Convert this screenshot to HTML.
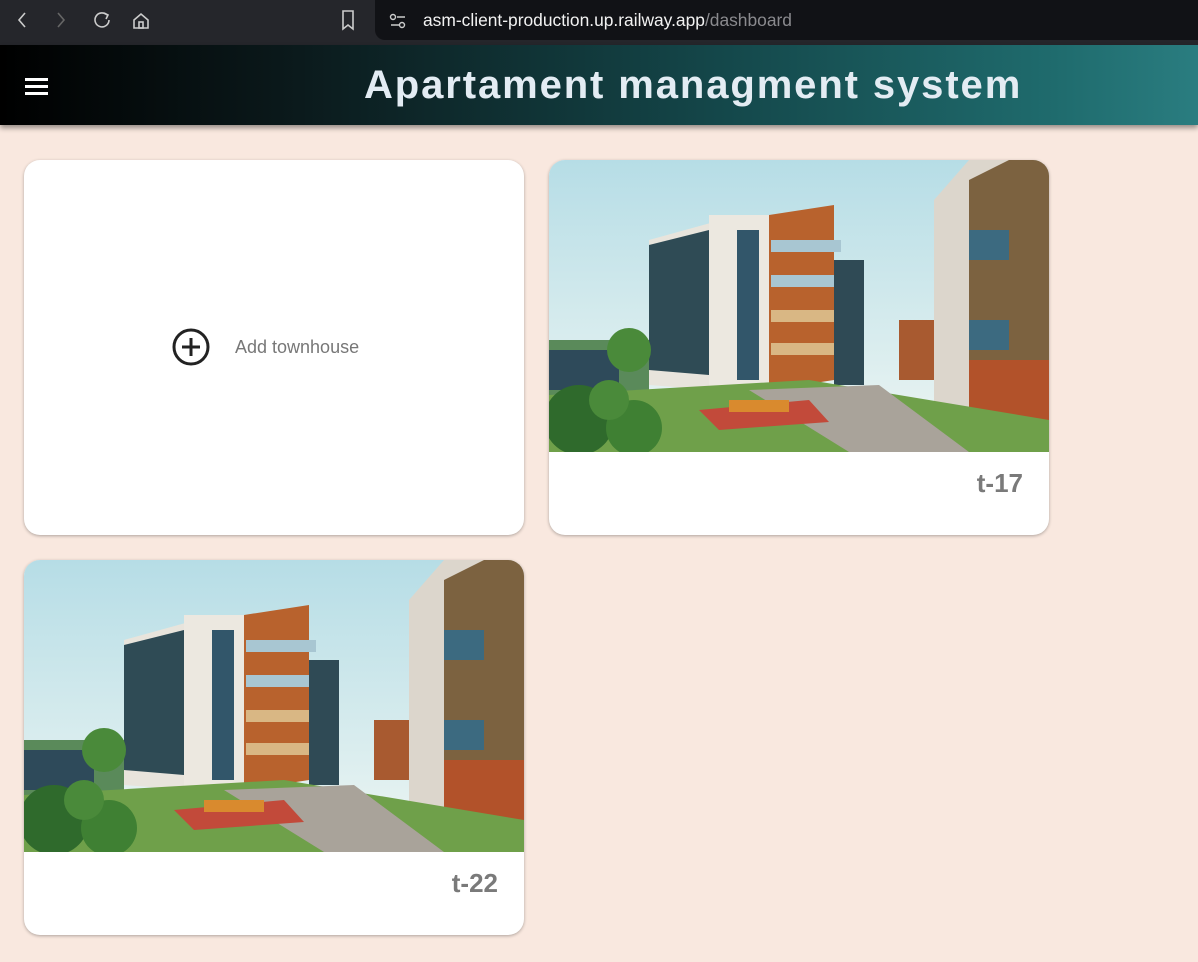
<!DOCTYPE html>
<html><head><meta charset="utf-8"><style>
*{margin:0;padding:0;box-sizing:border-box}
body{width:1198px;height:962px;background:#f9e8df;font-family:"Liberation Sans",sans-serif;position:relative;overflow:hidden}
.bar{position:absolute;left:0;top:0;width:1198px;height:45px;background:#25262b}
.url{position:absolute;left:375px;top:0;width:830px;height:40px;background:#111216;border-radius:0 0 0 10px}
.url span{position:absolute;left:48px;top:10px;font-size:17.4px;color:#f2f2f2}
.url span i{font-style:normal;color:#8a8a8e}
.hdr{position:absolute;left:0;top:45px;width:1198px;height:80px;background:linear-gradient(90deg,#000 0%,#0b1a1c 25%,#14474a 60%,#1f6b6d 88%,#2a7d80 100%);box-shadow:0 3px 5px rgba(0,0,0,.4)}
.hdr h1{position:absolute;left:364px;top:18px;font-size:40px;color:#e3ecf3;letter-spacing:1.9px;font-weight:bold}
.burger{position:absolute;left:25px;top:78px;width:23px}
.burger div{height:3px;background:#fff;margin-bottom:4px}
.card{position:absolute;width:500px;height:375px;background:#fff;border-radius:16px;overflow:hidden;box-shadow:0 1px 3px rgba(0,0,0,.3)}
.cap{position:absolute;right:26px;top:308px;font-size:26px;font-weight:bold;color:#7a7a7a}
.img{position:absolute;left:0;top:0;width:500px;height:292px}
</style></head><body>
<div class="bar">
<svg width="200" height="45" style="position:absolute;left:0;top:0" fill="none" stroke-width="1.6">
<path d="M25 13l-6 7 6 7" stroke="#ccc"/><path d="M58 13l6 7-6 7" stroke="#666"/>
<path d="M107 15a7 7 0 1 0 2 5" stroke="#ccc"/><path d="M104 13l4 2-2 4" stroke="#ccc"/>
<path d="M134 20l7-6 7 6v8h-14z" stroke="#ccc"/><rect x="139" y="22" width="4" height="6" stroke="#ccc"/>
</svg>
<svg width="20" height="25" style="position:absolute;left:340px;top:9px"><path d="M3 2h10v18l-5-4-5 4z" fill="none" stroke="#ccc" stroke-width="1.6"/></svg>
</div>
<div class="url"><svg width="20" height="20" style="position:absolute;left:13px;top:11px" stroke="#ccc" fill="none" stroke-width="1.4"><circle cx="5" cy="6" r="2.5"/><path d="M9 6h8M3 14h8"/><circle cx="14" cy="14" r="2.5"/></svg><span>asm-client-production.up.railway.app<i>/dashboard</i></span></div>
<div class="hdr"><h1>Apartament managment system</h1></div>
<div class="burger"><div></div><div></div><div></div></div>

<svg width="0" height="0" style="position:absolute"><defs>
<linearGradient id="sky" x1="0" y1="0" x2="0" y2="1"><stop offset="0" stop-color="#b6dde6"/><stop offset="1" stop-color="#eef6f3"/></linearGradient>
<g id="scene">
<rect width="500" height="292" fill="url(#sky)"/>
<rect x="0" y="180" width="100" height="60" fill="#5a8a5a"/>
<rect x="0" y="190" width="70" height="40" fill="#2e4a5a"/>
<polygon points="100,80 165,62 165,230 100,225" fill="#e8e4dc"/>
<polygon points="100,85 160,70 160,215 100,210" fill="#2f4b55"/>
<rect x="160" y="55" width="60" height="175" fill="#ece8e0"/>
<rect x="188" y="70" width="22" height="150" fill="#32566a"/>
<polygon points="220,55 285,45 285,220 220,230" fill="#b8622d"/>
<rect x="222" y="80" width="70" height="12" fill="#a8c6d2"/><rect x="222" y="115" width="70" height="12" fill="#a8c6d2"/><rect x="222" y="150" width="70" height="12" fill="#d9b784"/><rect x="222" y="183" width="70" height="12" fill="#d9b784"/>
<rect x="285" y="100" width="30" height="125" fill="#2f4a55"/>
<rect x="350" y="160" width="35" height="60" fill="#a85a30"/>
<polygon points="385,40 420,0 500,0 500,292 385,292" fill="#dcd6cc"/>
<polygon points="420,20 460,0 500,0 500,292 420,292" fill="#7c6240"/>
<rect x="420" y="70" width="40" height="30" fill="#3c6a80"/><rect x="420" y="160" width="40" height="30" fill="#3c6a80"/>
<rect x="420" y="200" width="80" height="60" fill="#b2522a"/>
<polygon points="0,235 260,220 500,260 500,292 0,292" fill="#6fa04a"/>
<polygon points="200,230 330,225 420,292 300,292" fill="#a9a39a"/>
<polygon points="150,250 260,240 280,262 170,270" fill="#c24a3a"/>
<rect x="180" y="240" width="60" height="12" fill="#d98a2e"/>
<circle cx="30" cy="260" r="35" fill="#2f6a2c"/><circle cx="85" cy="268" r="28" fill="#3f8033"/><circle cx="60" cy="240" r="20" fill="#4a8a3a"/>
<circle cx="80" cy="190" r="22" fill="#4a8a3a"/>
</g></defs></svg>

<div class="card" style="left:24px;top:160px">
<svg width="40" height="40" style="position:absolute;left:147px;top:167px"><circle cx="20" cy="20" r="17" fill="none" stroke="#222" stroke-width="3"/><path d="M20 11v18M11 20h18" stroke="#222" stroke-width="3"/></svg>
<div style="position:absolute;left:211px;top:177px;font-size:18px;color:#777">Add townhouse</div>
</div>
<div class="card" style="left:549px;top:160px"><svg class="img" viewBox="0 0 500 292"><use href="#scene"/></svg><div class="cap">t-17</div></div>
<div class="card" style="left:24px;top:560px"><svg class="img" viewBox="0 0 500 292"><use href="#scene"/></svg><div class="cap">t-22</div></div>
</body></html>
